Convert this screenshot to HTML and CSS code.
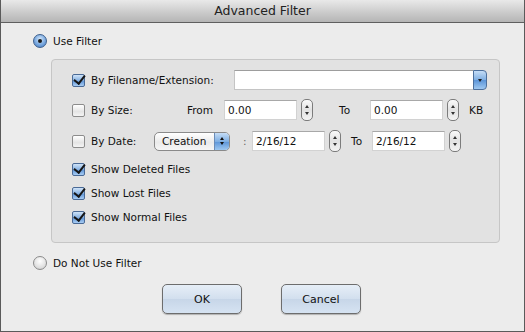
FILE: index.html
```html
<!DOCTYPE html>
<html lang="en">
<head>
  <meta charset="UTF-8">
  <title>Advanced Filter</title>
  <link rel="stylesheet" href="styles.css">
</head>
<body>
  <div class="window">
    <div class="titlebar">Advanced Filter</div>

    <div class="content">
      <div class="radio-row first">
        <span class="radio on"></span>
        <span>Use Filter</span>
      </div>

      <div class="group">
        <div class="row r1">
          <span class="check on"></span>
          <span class="lbl w-name">By Filename/Extension:</span>
          <div class="combo">
            <span class="combo-field"></span>
            <span class="combo-btn"><span class="tri-down"></span></span>
          </div>
        </div>

        <div class="row r2">
          <span class="check"></span>
          <span class="lbl w-size">By Size:</span>
          <span class="lbl from">From</span>
          <span class="field">0.00</span>
          <span class="stepper"><span class="up"></span><span class="down"></span></span>
          <span class="lbl to">To</span>
          <span class="field">0.00</span>
          <span class="stepper"><span class="up"></span><span class="down"></span></span>
          <span class="lbl kb">KB</span>
        </div>

        <div class="row r3">
          <span class="check"></span>
          <span class="lbl w-date">By Date:</span>
          <span class="popup">
            <span class="popup-text">Creation</span>
            <span class="popup-btn"><span class="up"></span><span class="down"></span></span>
          </span>
          <span class="lbl colon">:</span>
          <span class="field">2/16/12</span>
          <span class="stepper"><span class="up"></span><span class="down"></span></span>
          <span class="lbl to2">To</span>
          <span class="field">2/16/12</span>
          <span class="stepper"><span class="up"></span><span class="down"></span></span>
        </div>

        <div class="row crow c1">
          <span class="check on"></span>
          <span class="lbl">Show Deleted Files</span>
        </div>
        <div class="row crow">
          <span class="check on"></span>
          <span class="lbl">Show Lost Files</span>
        </div>
        <div class="row crow">
          <span class="check on"></span>
          <span class="lbl">Show Normal Files</span>
        </div>
      </div>

      <div class="radio-row second">
        <span class="radio"></span>
        <span>Do Not Use Filter</span>
      </div>

      <div class="buttons">
        <button class="btn">OK</button>
        <button class="btn">Cancel</button>
      </div>
    </div>
  </div>
</body>
</html>
```

FILE: styles.css
```css
* {
  box-sizing: border-box;
}

body {
  margin: 0;
  font-family: 'DejaVu Sans', sans-serif;
  font-size: 10.5px;
  color: #111;
  background: #ececec;
}

.window {
  width: 525px;
  height: 332px;
  background: #ececec;
  border: 1px solid #5a5a5a;
  border-top: none;
  overflow: hidden;
}

.titlebar {
  height: 23px;
  line-height: 22px;
  text-align: center;
  font-size: 12.5px;
  color: #222;
  background: linear-gradient(#e9e9e9, #c9c9c9 60%, #b5b5b5);
  border-bottom: 1px solid #5f5f5f;
}

.content {
  padding-top: 11px;
}

.radio-row {
  display: flex;
  align-items: center;
  height: 14px;
  padding-left: 32px;
}

.radio-row span + span {
  margin-left: 6px;
}

.radio {
  width: 14px;
  height: 14px;
  border-radius: 50%;
  border: 1px solid #8a8a8a;
  background: radial-gradient(circle at 50% 35%, #ffffff, #dcdcdc 70%, #bcbcbc);
  position: relative;
}

.radio.on {
  border-color: #3d5f8c;
  background: radial-gradient(circle at 50% 35%, #d5e8fb, #79a8df 55%, #3f77c0);
}

.radio.on::after {
  content: "";
  position: absolute;
  left: 4px;
  top: 4px;
  width: 4px;
  height: 4px;
  border-radius: 50%;
  background: #1a1a1a;
}

.group {
  margin: 11px 0 0 50px;
  width: 449px;
  height: 184px;
  background: #e2e2e2;
  border: 1px solid #c6c6c6;
  border-radius: 4px;
  padding: 10px 0 0 20px;
}

.row {
  display: flex;
  align-items: center;
  height: 22px;
}

.r1 {
  height: 20px;
}

.r2, .r3 {
  margin-top: 9px;
}

.crow {
  height: 20px;
  margin-top: 4px;
}

.crow.c1 {
  margin-top: 7px;
}

.check {
  flex: none;
  width: 13px;
  height: 13px;
  border: 1px solid #8c8c8c;
  border-radius: 2px;
  background: linear-gradient(#ffffff, #e4e4e4 60%, #f4f4f4);
  margin-right: 6px;
  position: relative;
}

.check.on {
  border-color: #4a6a96;
  background: linear-gradient(#cfe3f8, #86b1e2 50%, #5b92d6 51%, #a9cdf3);
}

.check.on::after {
  content: "";
  position: absolute;
  left: 3px;
  top: -2px;
  width: 5px;
  height: 9px;
  border-right: 2.5px solid #161616;
  border-bottom: 2px solid #161616;
  transform: rotate(38deg);
}

.lbl {
  flex: none;
  white-space: nowrap;
}

.w-name {
  width: 143px;
}

.w-size {
  width: 96px;
}

.w-date {
  width: 63px;
}

.from {
  width: 37px;
}

.to {
  margin-left: 26px;
  width: 31px;
}

.to2 {
  margin-left: 10px;
  width: 21px;
}

.kb {
  margin-left: 10px;
}

.colon {
  margin-left: 13px;
  width: 9px;
  color: #666;
}

.combo {
  display: flex;
  width: 253px;
  height: 20px;
}

.combo-field {
  flex: 1;
  background: #fff;
  border: 1px solid #c4c4c4;
  border-top-color: #9d9d9d;
  border-right: none;
}

.combo-btn {
  width: 14px;
  border: 1px solid #4c6f9c;
  border-radius: 0 4px 4px 0;
  background: linear-gradient(#c5ddf6, #7eaee2 50%, #5b94d8 51%, #9ec8f1);
  display: flex;
  align-items: center;
  justify-content: center;
}

.tri-down {
  width: 0;
  height: 0;
  border-left: 2.5px solid transparent;
  border-right: 2.5px solid transparent;
  border-top: 3px solid #1c1c1c;
}

.field {
  flex: none;
  width: 73px;
  height: 20px;
  line-height: 19px;
  padding-left: 3px;
  background: #fff;
  border: 1px solid #d2d2d2;
  border-top-color: #a8a8a8;
}

.stepper {
  flex: none;
  width: 12px;
  height: 22px;
  margin-left: 4px;
  border: 1px solid #7c7c7c;
  border-radius: 5px;
  background: linear-gradient(#fafafa, #e2e2e2 50%, #f3f3f3);
  display: flex;
  flex-direction: column;
  align-items: center;
  justify-content: space-around;
  padding: 3px 0;
}

.up {
  width: 0;
  height: 0;
  border-left: 2px solid transparent;
  border-right: 2px solid transparent;
  border-bottom: 3px solid #333;
}

.down {
  width: 0;
  height: 0;
  border-left: 2px solid transparent;
  border-right: 2px solid transparent;
  border-top: 3px solid #333;
}

.popup {
  flex: none;
  display: flex;
  width: 76px;
  height: 19px;
  border: 1px solid #8a8a8a;
  border-radius: 5px;
  overflow: hidden;
  background: linear-gradient(#ffffff, #eaeaea 55%, #f6f6f6);
}

.popup-text {
  flex: 1;
  padding-left: 7px;
  line-height: 17px;
}

.popup-btn {
  width: 15px;
  background: linear-gradient(#c5ddf6, #7eaee2 50%, #5b94d8 51%, #9ec8f1);
  border-left: 1px solid #6a8cb8;
  display: flex;
  flex-direction: column;
  align-items: center;
  justify-content: center;
  gap: 2px;
}

.popup-btn .up {
  border-bottom-color: #111;
}

.popup-btn .down {
  border-top-color: #111;
}

.radio-row.second {
  margin-top: 13px;
}

.buttons {
  display: flex;
  justify-content: center;
  gap: 39px;
  margin-top: 14px;
  padding-right: 2px;
}

.btn {
  width: 80px;
  height: 30px;
  font-family: inherit;
  font-size: 11px;
  color: #111;
  border: 1px solid #6d6d6d;
  border-radius: 5px;
  background: linear-gradient(#e6eef7, #d2dfee 50%, #c7d6e8 51%, #d6e3f2);
  box-shadow: 0 1px 1px rgba(0, 0, 0, 0.25);
  padding: 0;
}
```
